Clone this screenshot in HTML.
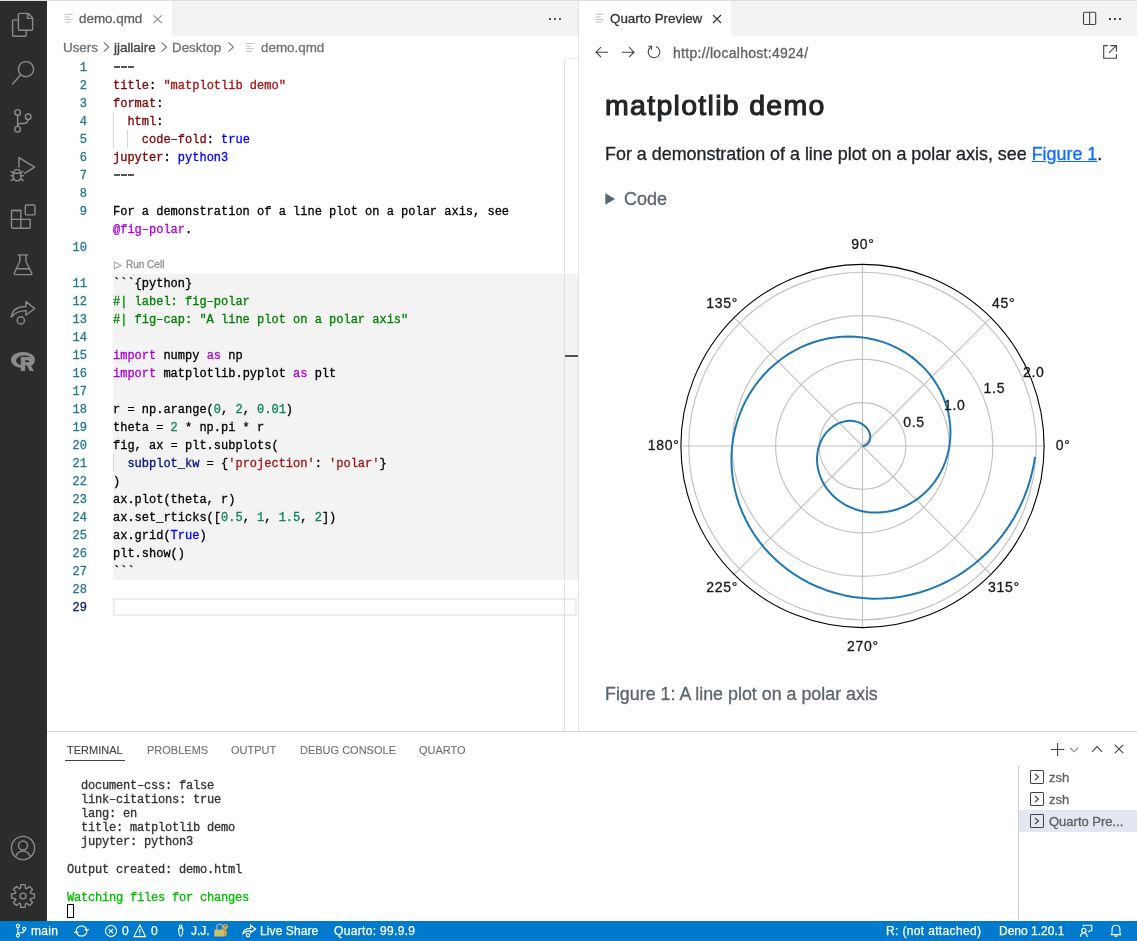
<!DOCTYPE html>
<html><head><meta charset="utf-8"><style>
*{margin:0;padding:0;box-sizing:border-box}
html,body{width:1137px;height:941px;overflow:hidden;background:#fff;font-family:"Liberation Sans",sans-serif;-webkit-text-stroke-width:0.3px}
.a{position:absolute;white-space:nowrap;will-change:transform}
.code{will-change:transform;font-family:"Liberation Mono",monospace;font-size:12px;line-height:18px;white-space:pre;color:#000;position:absolute;left:113px}
.ln{will-change:transform;font-family:"Liberation Mono",monospace;font-size:12px;line-height:18px;color:#237893;text-align:right;width:40px;left:47px;position:absolute}
.k{color:#800000}.s{color:#a31515}.b{color:#0000ff}.c{color:#008000}.n{color:#098658}.kw{color:#af00db}.v{color:#001080}.g{color:#333}
.term{will-change:transform;font-family:"Liberation Mono",monospace;font-size:12px;letter-spacing:-0.2px;line-height:14px;white-space:pre;color:#333;position:absolute;left:67px}
.ptab{will-change:transform;-webkit-text-stroke-width:0.1px;font-size:11px;color:#6f6f6f;position:absolute;top:744px;white-space:nowrap}
.sb{will-change:transform;font-size:12px;color:#fff;position:absolute;top:924px;white-space:nowrap;line-height:14px;-webkit-text-stroke:0.25px #fff}
</style></head><body>
<div class="a" style="left:0;top:0;width:1137px;height:1px;background:#dddddd"></div>
<div class="a" style="left:0;top:1px;width:47px;height:920px;background:#2c2c2c"></div>
<div class="a" style="left:47px;top:1px;width:531px;height:35px;background:#f3f3f3"></div>
<div class="a" style="left:47px;top:1px;width:125px;height:35px;background:#fff"></div>
<div class="a" style="left:79px;top:10px;transform:translateY(0.6px);font-size:13.4px;color:#616161;line-height:16px">demo.qmd</div>
<div class="a" style="left:63px;top:40px;font-size:13.4px;color:#717171;line-height:16px">Users</div>
<div class="a" style="left:114px;top:40px;font-size:13.4px;color:#424242;line-height:16px">jjallaire</div>
<div class="a" style="left:172px;top:40px;font-size:13.4px;color:#717171;line-height:16px">Desktop</div>
<div class="a" style="left:261px;top:40px;font-size:13.4px;color:#717171;line-height:16px">demo.qmd</div>
<div class="a" style="left:113px;top:274px;width:465px;height:306px;background:#f3f3f3"></div>
<div class="a" style="left:113px;top:598px;width:464px;height:18px;border:2px solid #eeeeee"></div>
<div class="a" style="left:113px;top:112px;width:1px;height:36px;background:#d3d3d3"></div>
<div class="a" style="left:127px;top:130px;width:1px;height:18px;background:#d3d3d3"></div>
<div class="a" style="left:113px;top:454px;width:1px;height:18px;background:#d3d3d3"></div>
<div class="ln" style="top:59px;color:#237893">1</div>
<div class="a" style="left:113.6px;top:66px;width:6.4px;height:1.5px;background:#555"></div>
<div class="a" style="left:120.8px;top:66px;width:6.4px;height:1.5px;background:#555"></div>
<div class="a" style="left:128.0px;top:66px;width:6.4px;height:1.5px;background:#555"></div>
<div class="ln" style="top:77px;color:#237893">2</div>
<div class="code" style="top:77px"><span class="k">title</span>: <span class="s">"matplotlib demo"</span></div>
<div class="ln" style="top:95px;color:#237893">3</div>
<div class="code" style="top:95px"><span class="k">format</span>:</div>
<div class="ln" style="top:113px;color:#237893">4</div>
<div class="code" style="top:113px">  <span class="k">html</span>:</div>
<div class="ln" style="top:131px;color:#237893">5</div>
<div class="code" style="top:131px">    <span class="k">code&#8211;fold</span>: <span class="b">true</span></div>
<div class="ln" style="top:149px;color:#237893">6</div>
<div class="code" style="top:149px"><span class="k">jupyter</span>: <span class="b">python3</span></div>
<div class="ln" style="top:167px;color:#237893">7</div>
<div class="a" style="left:113.6px;top:174px;width:6.4px;height:1.5px;background:#555"></div>
<div class="a" style="left:120.8px;top:174px;width:6.4px;height:1.5px;background:#555"></div>
<div class="a" style="left:128.0px;top:174px;width:6.4px;height:1.5px;background:#555"></div>
<div class="ln" style="top:185px;color:#237893">8</div>
<div class="ln" style="top:203px;color:#237893">9</div>
<div class="code" style="top:203px">For a demonstration of a line plot on a polar axis, see</div>
<div class="code" style="top:221px"><span class="kw">@fig&#8211;polar</span>.</div>
<div class="ln" style="top:239px;color:#237893">10</div>
<div class="a" style="left:114px;top:259px;font-size:10px;line-height:12px;color:#999">&#9655;</div>
<div class="a" style="left:126px;top:259px;font-size:10px;line-height:12px;color:#919191">Run Cell</div>
<div class="ln" style="top:275px;color:#237893">11</div>
<div class="code" style="top:275px">```{python}</div>
<div class="ln" style="top:293px;color:#237893">12</div>
<div class="code" style="top:293px"><span class="c">#| label: fig&#8211;polar</span></div>
<div class="ln" style="top:311px;color:#237893">13</div>
<div class="code" style="top:311px"><span class="c">#| fig&#8211;cap: "A line plot on a polar axis"</span></div>
<div class="ln" style="top:329px;color:#237893">14</div>
<div class="ln" style="top:347px;color:#237893">15</div>
<div class="code" style="top:347px"><span class="kw">import</span> numpy <span class="kw">as</span> np</div>
<div class="ln" style="top:365px;color:#237893">16</div>
<div class="code" style="top:365px"><span class="kw">import</span> matplotlib.pyplot <span class="kw">as</span> plt</div>
<div class="ln" style="top:383px;color:#237893">17</div>
<div class="ln" style="top:401px;color:#237893">18</div>
<div class="code" style="top:401px">r = np.arange(<span class="n">0</span>, <span class="n">2</span>, <span class="n">0.01</span>)</div>
<div class="ln" style="top:419px;color:#237893">19</div>
<div class="code" style="top:419px">theta = <span class="n">2</span> * np.pi * r</div>
<div class="ln" style="top:437px;color:#237893">20</div>
<div class="code" style="top:437px">fig, ax = plt.subplots(</div>
<div class="ln" style="top:455px;color:#237893">21</div>
<div class="code" style="top:455px">  <span class="v">subplot_kw</span> = {<span class="s">'projection'</span>: <span class="s">'polar'</span>}</div>
<div class="ln" style="top:473px;color:#237893">22</div>
<div class="code" style="top:473px">)</div>
<div class="ln" style="top:491px;color:#237893">23</div>
<div class="code" style="top:491px">ax.plot(theta, r)</div>
<div class="ln" style="top:509px;color:#237893">24</div>
<div class="code" style="top:509px">ax.set_rticks([<span class="n">0.5</span>, <span class="n">1</span>, <span class="n">1.5</span>, <span class="n">2</span>])</div>
<div class="ln" style="top:527px;color:#237893">25</div>
<div class="code" style="top:527px">ax.grid(<span class="b">True</span>)</div>
<div class="ln" style="top:545px;color:#237893">26</div>
<div class="code" style="top:545px">plt.show()</div>
<div class="ln" style="top:563px;color:#237893">27</div>
<div class="code" style="top:563px">```</div>
<div class="ln" style="top:581px;color:#237893">28</div>
<div class="ln" style="top:599px;color:#0b216f">29</div>
<div class="a" style="left:564px;top:58px;width:1px;height:673px;background:#e0e0e0"></div>
<div class="a" style="left:564px;top:58px;width:14px;height:1px;background:#e8e8e8"></div>
<div class="a" style="left:565px;top:355px;width:13px;height:2px;background:#505050"></div>
<div class="a" style="left:578px;top:1px;width:1px;height:730px;background:#e3e3e3"></div>
<div class="a" style="left:579px;top:1px;width:558px;height:35px;background:#f3f3f3"></div>
<div class="a" style="left:579px;top:1px;width:152px;height:35px;background:#fff"></div>
<div class="a" style="left:610px;top:11px;font-size:13.4px;color:#333;line-height:16px">Quarto Preview</div>
<div class="a" style="left:672.5px;top:45px;font-size:14px;color:#616161;line-height:17px;letter-spacing:0.28px">http://localhost:4924/</div>
<div class="a" style="left:605px;top:88px;font-size:28.5px;letter-spacing:1.3px;-webkit-text-stroke:1.1px #212529;color:#212529;line-height:34px">matplotlib demo</div>
<div class="a" style="left:605px;top:143px;font-size:17.9px;color:#212529;line-height:22px">For a demonstration of a line plot on a polar axis, see <span style="color:#0d6efd;text-decoration:underline">Figure 1</span>.</div>
<div class="a" style="left:624px;top:188px;font-size:18px;color:#5a6570;line-height:22px">Code</div>
<div class="a" style="left:605px;top:683px;font-size:17.85px;color:#5a6570;line-height:22px">Figure 1: A line plot on a polar axis</div>
<div class="a" style="left:47px;top:731px;width:1090px;height:1px;background:#d5d5d5"></div>
<div class="ptab" style="left:67px;color:#424242">TERMINAL</div>
<div class="a" style="left:65px;top:760px;width:60px;height:1px;background:#424242"></div>
<div class="ptab" style="left:147px">PROBLEMS</div>
<div class="ptab" style="left:231px">OUTPUT</div>
<div class="ptab" style="left:300px">DEBUG CONSOLE</div>
<div class="ptab" style="left:419px">QUARTO</div>
<div class="term" style="top:779px">  document&#8211;css: false</div>
<div class="term" style="top:793px">  link&#8211;citations: true</div>
<div class="term" style="top:807px">  lang: en</div>
<div class="term" style="top:821px">  title: matplotlib demo</div>
<div class="term" style="top:835px">  jupyter: python3</div>
<div class="term" style="top:863px">Output created: demo.html</div>
<div class="term" style="top:891px"><span style="color:#00bc00">Watching files for changes</span></div>
<div class="a" style="left:67px;top:904px;width:7px;height:14px;border:1px solid #000"></div>
<div class="a" style="left:1018px;top:766px;width:1px;height:155px;background:#d0d0d0"></div>
<div class="a" style="left:1019px;top:810px;width:118px;height:22px;background:#e4e6f1"></div>
<div class="a" style="left:1030px;top:770px;width:14px;height:14px;border:1px solid #424242;border-radius:1px"></div>
<div class="a" style="left:1049px;top:770px;font-size:13px;color:#616161;line-height:16px">zsh</div>
<div class="a" style="left:1030px;top:792px;width:14px;height:14px;border:1px solid #424242;border-radius:1px"></div>
<div class="a" style="left:1049px;top:792px;font-size:13px;color:#616161;line-height:16px">zsh</div>
<div class="a" style="left:1030px;top:814px;width:14px;height:14px;border:1px solid #424242;border-radius:1px"></div>
<div class="a" style="left:1049px;top:814px;font-size:13px;color:#616161;line-height:16px">Quarto Pre...</div>
<div class="a" style="left:0;top:921px;width:1137px;height:20px;background:#007acc"></div>
<div class="sb" style="left:31px;letter-spacing:0.3px;">main</div>
<div class="sb" style="left:122px;">0</div>
<div class="sb" style="left:151px;">0</div>
<div class="sb" style="left:191px;">J.J.</div>
<div class="sb" style="left:259.5px;letter-spacing:0.1px;">Live Share</div>
<div class="sb" style="left:334px;letter-spacing:0.33px;">Quarto: 99.9.9</div>
<div class="sb" style="left:886px;letter-spacing:0.35px;">R: (not attached)</div>
<div class="sb" style="left:999px;">Deno 1.20.1</div>
<svg class="a" style="left:0;top:0" width="1137" height="941" viewBox="0 0 1137 941">
<g fill="none" stroke="#8b8b8b" stroke-width="1.4" stroke-linejoin="round" stroke-linecap="round">
<path d="M18.5 19.9 H13.8 Q12.6 19.9 12.6 21.1 V35 Q12.6 36.2 13.8 36.2 H25 Q26.2 36.2 26.2 35 V30.3"/>
<path d="M19.6 13.4 H28.2 L32.6 17.8 V29.1 Q32.6 30.3 31.4 30.3 H19.6 Q18.4 30.3 18.4 29.1 V14.6 Q18.4 13.4 19.6 13.4 Z"/>
<path d="M27.6 13.6 V18.4 H32.4"/>
<circle cx="26" cy="69.2" r="7.6"/>
<path d="M20.6 75 L12.6 84"/>
<circle cx="17.6" cy="112.4" r="2.8"/><circle cx="17.6" cy="129.2" r="2.8"/><circle cx="28.2" cy="116.8" r="2.8"/>
<path d="M17.6 115.2 V126.4"/><path d="M28.2 119.6 Q27.5 123.5 23 123.5 H20 Q17.6 123.8 17.6 126"/>
<path d="M18.9 167 V157.6 L34.5 167.2 L24.6 173.4"/>
<path d="M13.4 174 Q13.4 169.6 17.15 169.6 Q20.9 169.6 20.9 174 V177 Q20.9 180.8 17.15 180.8 Q13.4 180.8 13.4 177 Z"/>
<path d="M11.2 171.5 L13.4 173 M23.1 171.5 L20.9 173 M11 175.8 H13.4 M20.9 175.8 H23.3 M11.2 180.6 L13.6 178.6 M23.1 180.6 L20.7 178.6 M13.5 173.3 H20.8"/>
<path d="M11.5 210.5 H20.8 V228.2 H12.5 Q11.5 228.2 11.5 227.2 Z M11.5 219.4 H30.2 V227.2 Q30.2 228.2 29.2 228.2 H20.8"/>
<rect x="25.3" y="205" width="9.7" height="9.9" rx="1.2"/>
<path d="M12.5 210.5 H20.8"/>
<path d="M18.2 254.9 H27.5 M19.8 255 V261.5 L14.3 273 Q13.8 274.6 15.3 274.6 H30.8 Q32.2 274.6 31.7 273 L26 261.5 V255 M16.8 268.7 H29.2"/>
<path d="M11.3 317 Q12.8 306.5 26 306.5 V301.6 L34.6 308.5 L26 315.2 V310.6 Q17 310.4 11.3 317 Z"/>
<circle cx="20.8" cy="320.4" r="3.6"/>
<circle cx="23" cy="848" r="11.6"/><circle cx="23" cy="845.5" r="4.5"/>
<path d="M15.8 856.6 Q17.6 851.1 23 851.1 Q28.4 851.1 30.2 856.6"/>
<path d="M20.89 884.59 L25.11 884.59 L25.60 888.44 L26.51 888.81 L29.57 886.44 L32.56 889.43 L30.19 892.49 L30.56 893.40 L34.41 893.89 L34.41 898.11 L30.56 898.60 L30.19 899.51 L32.56 902.57 L29.57 905.56 L26.51 903.19 L25.60 903.56 L25.11 907.41 L20.89 907.41 L20.40 903.56 L19.49 903.19 L16.43 905.56 L13.44 902.57 L15.81 899.51 L15.44 898.60 L11.59 898.11 L11.59 893.89 L15.44 893.40 L15.81 892.49 L13.44 889.43 L16.43 886.44 L19.49 888.81 L20.40 888.44 Z"/><circle cx="23" cy="896" r="2.9"/>
</g>
<g fill="#8b8b8b"><path fill-rule="evenodd" d="M11 360 A12 8.1 0 1 0 35 360 A12 8.1 0 1 0 11 360 Z M16 360.6 A8.4 5.1 0 1 0 32.8 360.6 A8.4 5.1 0 1 0 16 360.6 Z"/>
<path d="M25.1 364.6 H28.4 L31 369.5 H25.1 Z" fill="#2c2c2c"/>
<path fill-rule="evenodd" d="M20.8 357 H29.3 Q32.9 357 32.9 360.9 Q32.9 363.9 30.2 364.7 L34 371 H29.8 L26.8 365.3 H25.1 V371 H20.8 Z M25.1 360.3 H28 Q29.1 360.3 29.1 361.25 Q29.1 362.2 28 362.2 H25.1 Z"/></g>
<g stroke="#c5c5c5" stroke-width="1.1"><path d="M64.7 14.3 H72.7"/><path d="M64.7 17.0 H69.9"/><path d="M64.7 19.5 H72.7"/><path d="M64.7 22.1 H70.7"/></g>
<g stroke="#c5c5c5" stroke-width="1.1"><path d="M595.7 14.3 H603.7"/><path d="M595.7 17.0 H600.9000000000001"/><path d="M595.7 19.5 H603.7"/><path d="M595.7 22.1 H601.7"/></g>
<g stroke="#c5c5c5" stroke-width="1.1"><path d="M246 43.5 H254"/><path d="M246 46.2 H251.2"/><path d="M246 48.7 H254"/><path d="M246 51.3 H252"/></g>
<path d="M153.5 15.3 L161.8 23.2 M161.8 15.3 L153.5 23.2" stroke="#8a8a8a" stroke-width="1.1"/>
<path d="M713 15 L721 23 M721 15 L713 23" stroke="#333" stroke-width="1.1"/>
<path d="M103.8 42.4 L108.8 47 L103.8 51.6" fill="none" stroke="#717171" stroke-width="1.05"/>
<path d="M161.5 42.4 L166.5 47 L161.5 51.6" fill="none" stroke="#717171" stroke-width="1.05"/>
<path d="M228.4 42.4 L233.4 47 L228.4 51.6" fill="none" stroke="#717171" stroke-width="1.05"/>
<rect x="549" y="18" width="2" height="2" fill="#555"/>
<rect x="554" y="18" width="2" height="2" fill="#555"/>
<rect x="559" y="18" width="2" height="2" fill="#555"/>
<rect x="1109" y="18" width="2" height="2" fill="#424242"/>
<rect x="1114" y="18" width="2" height="2" fill="#424242"/>
<rect x="1119" y="18" width="2" height="2" fill="#424242"/>
<rect x="1083.5" y="12.3" width="12.2" height="12.2" rx="1.2" fill="none" stroke="#424242" stroke-width="1.1"/><path d="M1089.6 12.3 V24.5" stroke="#424242" stroke-width="1.1"/>
<path d="M1107.8 45.6 H1103.7 V58.3 H1116.4 V54.2 M1110.3 45.6 H1116.4 V51.7 M1109 52.8 L1116 45.8" fill="none" stroke="#424242" stroke-width="1.1"/>
<g fill="none" stroke="#424242" stroke-width="1.1"><path d="M596 52.2 H608 M601 47.2 L596 52.2 L601 57.2"/><path d="M622 52.2 H634 M629 47.2 L634 52.2 L629 57.2"/>
<path d="M655.98 46.55 A5.8 5.8 0 1 1 650.67 47.25"/><path d="M648.2 46.3 H651.6 V49.8"/></g>
<path d="M605.3 193.3 L615 199 L605.3 204.7 Z" fill="#5a6570"/>
<g fill="none" stroke="#c2c2c2" stroke-width="1.15">
<circle cx="862.5" cy="446" r="43.45"/>
<circle cx="862.5" cy="446" r="86.90"/>
<circle cx="862.5" cy="446" r="130.35"/>
<circle cx="862.5" cy="446" r="173.80"/>
<path d="M862.5 446 L1044.10 446.00"/>
<path d="M862.5 446 L990.91 317.59"/>
<path d="M862.5 446 L862.50 264.40"/>
<path d="M862.5 446 L734.09 317.59"/>
<path d="M862.5 446 L680.90 446.00"/>
<path d="M862.5 446 L734.09 574.41"/>
<path d="M862.5 446 L862.50 627.60"/>
<path d="M862.5 446 L990.91 574.41"/>
</g>
<path d="M862.50 446.00 L863.37 445.95 L864.22 445.78 L865.06 445.51 L865.87 445.14 L866.63 444.66 L867.35 444.08 L868.00 443.41 L868.59 442.65 L869.10 441.81 L869.53 440.89 L869.87 439.91 L870.10 438.86 L870.23 437.76 L870.25 436.63 L870.16 435.45 L869.95 434.26 L869.62 433.05 L869.16 431.85 L868.58 430.65 L867.87 429.47 L867.04 428.32 L866.08 427.22 L865.01 426.17 L863.81 425.19 L862.50 424.27 L861.08 423.45 L859.56 422.72 L857.94 422.10 L856.23 421.59 L854.44 421.21 L852.58 420.95 L850.66 420.84 L848.68 420.87 L846.67 421.05 L844.62 421.39 L842.56 421.90 L840.49 422.56 L838.43 423.39 L836.39 424.40 L834.38 425.57 L832.42 426.91 L830.52 428.42 L828.69 430.09 L826.95 431.92 L825.31 433.92 L823.78 436.06 L822.38 438.35 L821.12 440.77 L820.00 443.33 L819.05 446.00 L818.27 448.78 L817.67 451.66 L817.26 454.63 L817.05 457.67 L817.04 460.77 L817.25 463.91 L817.68 467.09 L818.33 470.28 L819.21 473.47 L820.32 476.65 L821.66 479.79 L823.22 482.88 L825.02 485.91 L827.05 488.85 L829.30 491.70 L831.77 494.43 L834.45 497.02 L837.34 499.47 L840.43 501.75 L843.70 503.85 L847.16 505.76 L850.78 507.46 L854.55 508.94 L858.46 510.18 L862.50 511.18 L866.65 511.91 L870.89 512.39 L875.20 512.58 L879.57 512.49 L883.98 512.12 L888.41 511.45 L892.84 510.48 L897.25 509.21 L901.61 507.63 L905.92 505.76 L910.14 503.58 L914.25 501.11 L918.25 498.35 L922.09 495.30 L925.77 491.97 L929.27 488.37 L932.56 484.52 L935.63 480.41 L938.45 476.07 L941.01 471.51 L943.30 466.75 L945.30 461.79 L946.99 456.67 L948.36 451.40 L949.40 446.00 L950.10 440.49 L950.44 434.89 L950.42 429.23 L950.04 423.52 L949.28 417.80 L948.15 412.09 L946.63 406.41 L944.74 400.79 L942.48 395.25 L939.83 389.81 L936.82 384.51 L933.45 379.37 L929.72 374.42 L925.65 369.67 L921.24 365.15 L916.51 360.89 L911.48 356.90 L906.16 353.22 L900.57 349.85 L894.72 346.82 L888.65 344.15 L882.37 341.86 L875.90 339.96 L869.27 338.46 L862.50 337.38 L855.62 336.72 L848.67 336.51 L841.66 336.74 L834.62 337.42 L827.59 338.56 L820.59 340.16 L813.66 342.21 L806.82 344.72 L800.11 347.68 L793.54 351.09 L787.17 354.94 L781.00 359.21 L775.08 363.91 L769.43 369.00 L764.07 374.49 L759.05 380.35 L754.37 386.55 L750.06 393.09 L746.15 399.93 L742.66 407.06 L739.61 414.45 L737.02 422.06 L734.90 429.88 L733.27 437.87 L732.15 446.00 L731.54 454.24 L731.45 462.56 L731.90 470.91 L732.88 479.28 L734.40 487.62 L736.46 495.90 L739.05 504.09 L742.18 512.15 L745.84 520.04 L750.01 527.73 L754.70 535.18 L759.88 542.37 L765.54 549.26 L771.66 555.81 L778.22 562.00 L785.20 567.80 L792.59 573.17 L800.34 578.10 L808.44 582.55 L816.85 586.50 L825.54 589.93 L834.49 592.82 L843.66 595.15 L853.01 596.91 L862.50 598.08 L872.10 598.64 L881.78 598.60 L891.48 597.94 L901.18 596.66 L910.84 594.76 L920.40 592.24 L929.84 589.11 L939.11 585.36 L948.18 581.00 L957.00 576.06 L965.53 570.54 L973.74 564.46 L981.59 557.84 L989.05 550.69 L996.08 543.05 L1002.64 534.94 L1008.71 526.38 L1014.25 517.41 L1019.25 508.06 L1023.66 498.36 L1027.47 488.36 L1030.66 478.08 L1033.21 467.57 L1035.09 456.86" fill="none" stroke="#1f77b4" stroke-width="2" stroke-linejoin="round"/>
<circle cx="862.5" cy="446" r="181.6" fill="none" stroke="#000" stroke-width="1.1"/>
<g font-family="Liberation Sans" font-size="14" fill="#1a1a1a" stroke="#1a1a1a" stroke-width="0.3" letter-spacing="0.7">
<text x="851.2" y="249.4">90°</text>
<text x="992" y="307.7">45°</text>
<text x="1055.8" y="449.7">0°</text>
<text x="988" y="592">315°</text>
<text x="847" y="651">270°</text>
<text x="706.3" y="592">225°</text>
<text x="647.7" y="450.1">180°</text>
<text x="706.3" y="308">135°</text>
<text x="903.3" y="426.8">0.5</text>
<text x="944" y="410.2">1.0</text>
<text x="983.6" y="393.1">1.5</text>
<text x="1023" y="377.1">2.0</text>
</g>
<g fill="none" stroke="#424242" stroke-width="1.1"><path d="M1057.6 743 V756 M1051 749.5 H1064.2"/><path d="M1070.3 748 L1074 751.8 L1077.8 748" stroke="#8a8a8a"/><path d="M1092 751.8 L1097 746.5 L1102 751.8"/><path d="M1114.8 744.8 L1123.3 753.2 M1123.3 744.8 L1114.8 753.2"/><path d="M1035 774 L1038.5 777 L1035 780"/><path d="M1035 796 L1038.5 799 L1035 802"/><path d="M1035 818 L1038.5 821 L1035 824"/></g>
<g fill="none" stroke="#fff" stroke-width="1.1">
<circle cx="17.9" cy="926" r="1.6"/><circle cx="17.9" cy="935.6" r="1.6"/><circle cx="24.3" cy="928.8" r="1.6"/><path d="M17.9 927.6 V934 M24.3 930.4 Q24.3 932.6 21 932.8 Q18.2 933 17.9 934"/>
<path d="M76.2 930 A5.5 5.5 0 0 1 86.8 930 M86.8 932 A5.5 5.5 0 0 1 76.2 932"/>
<path d="M84.8 929 L86.8 931.2 L88.8 929 M74.2 933 L76.2 930.8 L78.2 933"/>
<circle cx="111" cy="931" r="5.6"/><path d="M108.8 928.8 L113.2 933.2 M113.2 928.8 L108.8 933.2"/>
<path d="M139.8 925 L145.6 936.6 H134 Z M139.8 929 V933 M139.8 934.3 V935.3"/>
<circle cx="180.7" cy="926.3" r="1.3"/><path d="M178.6 929.2 Q178.4 928 180.7 928 Q183 928 182.8 929.2 L182.3 933.5 Q181.8 936.3 180.7 936.3 Q179.6 936.3 179.1 933.5 Z"/>
<path d="M243 933.6 Q243.6 928.6 250.6 928.4 V925.2 L255.5 929 L250.6 932.6 V930.6 Q246.4 930.6 243 933.6 Z" stroke-width="1.2"/><circle cx="248" cy="935.3" r="1.7"/>
<circle cx="1083.8" cy="930.4" r="2.1"/><path d="M1080.4 937 Q1080.8 932.9 1083.8 932.9 Q1086.8 932.9 1087.2 937 M1083.3 926.6 V925.2 H1091.8 V930.8 H1089.6 L1088.3 932.2"/>
<path d="M1111.4 934.6 H1120.6 Q1119.9 933.5 1119.9 931 V929.3 Q1119.9 925.2 1116 925.2 Q1112.1 925.2 1112.1 929.3 V931 Q1112.1 933.5 1111.4 934.6 Z M1114.6 935.6 Q1116 937.4 1117.4 935.6"/>
</g>
<g><path d="M216.6 929.8 V927.5 Q216.6 924.2 219.6 924.2 Q222.6 924.2 222.6 927.5 V929.8" fill="none" stroke="#a9a9a9" stroke-width="1.3"/><rect x="214.3" y="929.6" width="10.3" height="6.8" rx="0.8" fill="#cdbf6e"/><circle cx="225.4" cy="926.6" r="2.6" fill="#eaa82c"/><circle cx="225.4" cy="926" r="0.9" fill="#007acc"/><path d="M225.4 928.5 V936.2 M225.4 932.5 H227 M225.4 934.5 H226.6" stroke="#eaa82c" stroke-width="1.5"/></g>
</svg>
</body></html>
